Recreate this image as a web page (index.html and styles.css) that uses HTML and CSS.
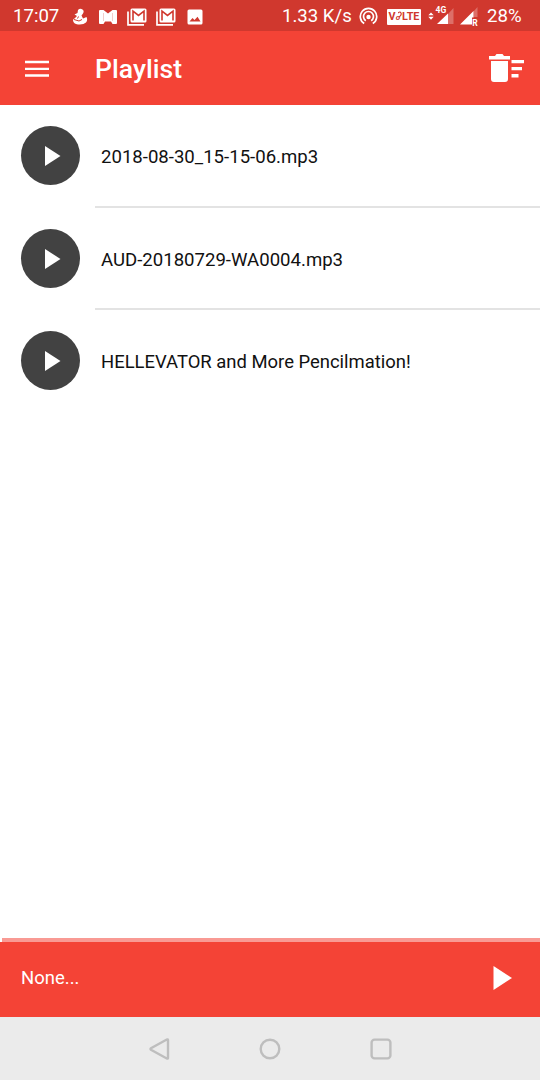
FILE: index.html
```html
<!DOCTYPE html>
<html lang="en">
<head>
<meta charset="utf-8">
<title>Playlist</title>
<link rel="stylesheet" href="styles.css">
</head>
<body>
<div class="app">
  <div class="status">
    <span class="clock">17:07</span>
    <svg class="duck" width="16" height="18" viewBox="0 0 16 18"><path d="M6 2Q8 0 10.5 1.5 12.5 3 11 5.5L9.5 7.5l1.5 3 3.5-1.5q1.5 3-.5 5.5-2.500 2.500-8 2Q1.500 16 1 12.500 1 11 2.500 10.500L5 8 2.500 6.500 5.500 5z" fill="#fff"/><path d="M2 11.500l5 1.500 3-1.500M6.500 8.500l-1 2" fill="none" stroke="#d0382e"/></svg>
    <svg class="mail" width="20" height="16" viewBox="0 0 20 16"><path d="M1 2q0-1 1-1h3.500L10 4.500 14.500 1H18q1 0 1 1v12q0 1-1 1h-3.500L13 12.500H7L5.500 15H2q-1 0-1-1z" fill="#fff"/><path d="M5.500 4v8M14.500 4v8" stroke="#d0382e" stroke-opacity=".25"/></svg>
    <svg class="stack" width="20" height="18" viewBox="0 0 20 18"><path d="M1 3.5V16.8h16" fill="none" stroke="#fff" stroke-width="1.7"/><rect x="3.5" y=".5" width="16" height="14" rx="1.5" fill="#fff"/><path d="M6 12.500V3.200l5.500 4.300L17 3.200v9.300" fill="none" stroke="#d0382e" stroke-width="1.600"/></svg>
    <svg class="stack" width="20" height="18" viewBox="0 0 20 18"><path d="M1 3.5V16.8h16" fill="none" stroke="#fff" stroke-width="1.7"/><rect x="3.5" y=".5" width="16" height="14" rx="1.5" fill="#fff"/><path d="M6 12.500V3.200l5.500 4.300L17 3.200v9.300" fill="none" stroke="#d0382e" stroke-width="1.600"/></svg>
    <svg class="photo" width="16" height="16" viewBox="0 0 16 16"><rect x=".5" y=".5" width="15" height="15" rx="1.5" fill="#fff"/><path d="M2.500 12.500l3-3.500 2 2 3-3.200 3 4.700z" fill="#d0382e"/></svg>
    <span class="speed">1.33 K/s</span>
    <svg class="hotspot" width="19" height="19" viewBox="0 0 19 19"><g fill="none" stroke="#fff" stroke-width="1.7"><path d="M5.2 16.5a8.2 8.2 0 1 1 8.6 0"/><path d="M6.8 13.7a5 5 0 1 1 5.4 0"/></g><circle cx="9.5" cy="10" r="2.2" fill="#fff"/></svg>
    <span class="volte">V<i>o</i><svg class="wave" width="4" height="10" viewBox="0 0 4 10"><path d="M0 2q2-2 3 0t-2 4" fill="none" stroke="#d0382e" stroke-width="1.200"/></svg>LTE</span>
    <svg class="signal" width="26" height="20" viewBox="0 0 26 20"><path d="M25.500 3v16H20V9z" fill="#fff" fill-opacity=".28"/><path d="M20 8.500V19H9z" fill="#fff"/><path d="M.3 10.300L3 7.600l2.700 2.700zM.3 11.800h5.400L3 14.800z" fill="#fff"/><text x="7.500" y="7.800" class="net">4G</text></svg>
    <svg class="signal2" width="19" height="21" viewBox="0 0 19 21"><path d="M17.500 1v10h-4V5.500z" fill="#fff" fill-opacity=".28"/><path d="M13.500 5V11.500H12V18.500H0z" fill="#fff"/><text x="12.300" y="19.500" class="roam">R</text></svg>
    <span class="battery">28%</span>
  </div>
  <header class="toolbar">
    <svg class="menu" width="24" height="18" viewBox="0 0 24 18"><path d="M0 2h24M0 8.800h24M0 15.500h24" stroke="#fff" stroke-width="2.300"/></svg>
    <h1>Playlist</h1>
    <svg class="sweep" width="36" height="29" viewBox="0 0 36 29"><path d="M0 2h6l1.500-2h6L15 2h6v3.500H0zM2 7h17v18q0 3-3 3H5q-3 0-3-3zM22.500 6H35v3.300H22.500zM22.500 13H33v3.300H22.500zM22.500 20h7v3.500h-7z" fill="#fff"/></svg>
  </header>
  <main class="list">
    <div class="row"><span class="disc"><svg width="16" height="20" viewBox="0 0 16 20"><path d="M0 0l15.500 10L0 20z" fill="#fff"/></svg></span><p class="name">2018-08-30_15-15-06.mp3</p></div>
    <div class="row"><span class="disc"><svg width="16" height="20" viewBox="0 0 16 20"><path d="M0 0l15.500 10L0 20z" fill="#fff"/></svg></span><p class="name">AUD-20180729-WA0004.mp3</p></div>
    <div class="row"><span class="disc"><svg width="16" height="20" viewBox="0 0 16 20"><path d="M0 0l15.500 10L0 20z" fill="#fff"/></svg></span><p class="name title">HELLEVATOR and More Pencilmation!</p></div>
  </main>
  <div class="progress"></div>
  <footer class="player">
    <span>None...</span>
    <svg width="19" height="24" viewBox="0 0 19 24"><path d="M.5 0l18.500 12L.5 24z" fill="#fff"/></svg>
  </footer>
  <nav class="nav">
    <svg width="22" height="22" viewBox="0 0 22 22"><path d="M20 2v18q-.2 1-1.200.5L3 11.800q-1-.8 0-1.600l15.800-8.700q1-.5 1.200.5z"/></svg>
    <svg width="22" height="22" viewBox="0 0 22 22"><circle cx="11" cy="11" r="9.3"/></svg>
    <svg width="22" height="22" viewBox="0 0 22 22"><rect x="1.600" y="1.600" width="18.800" height="18.800" rx="3"/></svg>
  </nav>
</div>
</body>
</html>
```
FILE: styles.css
```css
body { margin: 0; background: #fff; font-family: Roboto, "Liberation Sans", sans-serif; }
svg { display: block; flex: none; }
.app { display: flex; flex-direction: column; width: 540px; height: 1080px; overflow: hidden; }
.status {
  display: flex; align-items: center; box-sizing: border-box; height: 31px;
  padding: 2px 0 0 13px; background: #d0382e; color: #fff;
  font-size: 18.6px; line-height: 23px; white-space: nowrap;
}
.status span { flex: none; }
.clock { width: 59px; }
.duck { margin-right: 10px; }
.mail { margin-right: 9px; }
.stack { margin-right: 9px; }
.photo { margin: 0 79px 0 2px; }
.speed { width: 77px; }
.hotspot { margin-right: 9px; }
.status .volte {
  display: flex; justify-content: center; box-sizing: border-box; width: 34px; height: 16px;
  margin-right: 7px; border-radius: 1px; background: #fff; color: #d0382e;
  font-size: 10.8px; line-height: 16px; font-weight: 700;
}
.volte i { font-size: 8px; line-height: 18px; }
.wave { margin: 2px 0 0 -2px; }
.signal { margin: -3px 6px 0 0; }
.signal2 { margin-right: 8px; }
.net { font: 700 8.5px Roboto, sans-serif; fill: #fff; }
.roam { font: 700 8.5px Roboto, sans-serif; fill: #fff; }
.toolbar {
  display: flex; align-items: center; box-sizing: border-box; height: 74px;
  padding: 0 15px 0 25px; background: #f44336; color: #fff;
}
.menu { margin-top: 1px; }
.toolbar h1 { margin: 2px auto 0 46px; font-size: 26.6px; line-height: 32px; font-weight: 500; }
.list { flex: 1; }
.row { display: flex; align-items: center; height: 102.5px; padding-left: 21px; }
.disc {
  display: flex; align-items: center; flex: none; box-sizing: border-box;
  width: 59px; height: 59px; margin-bottom: 1.5px; padding: 1px 0 0 24px;
  border-radius: 50%; background: #424242;
}
.name {
  flex: 1; box-sizing: border-box; height: 100%; margin: 0 0 0 15px; padding-left: 6px;
  color: #111; font-size: 18.58px; line-height: 104px; border-bottom: 2px solid #e3e3e3;
}
.row:last-child .name { border: 0; }
.title { font-size: 18.45px; }
.progress { height: 4px; margin-left: 2px; background: #f99a94; }
.player {
  display: flex; align-items: center; justify-content: space-between; box-sizing: border-box;
  height: 75px; padding: 0 28px 3px 21px; background: #f44336; color: #fff; font-size: 18.5px;
}
.nav {
  display: flex; align-items: center; justify-content: center; gap: 89px;
  height: 63px; background: #ebebeb;
}
.nav svg { fill: none; stroke: #bebebe; stroke-width: 2.4; }
```
